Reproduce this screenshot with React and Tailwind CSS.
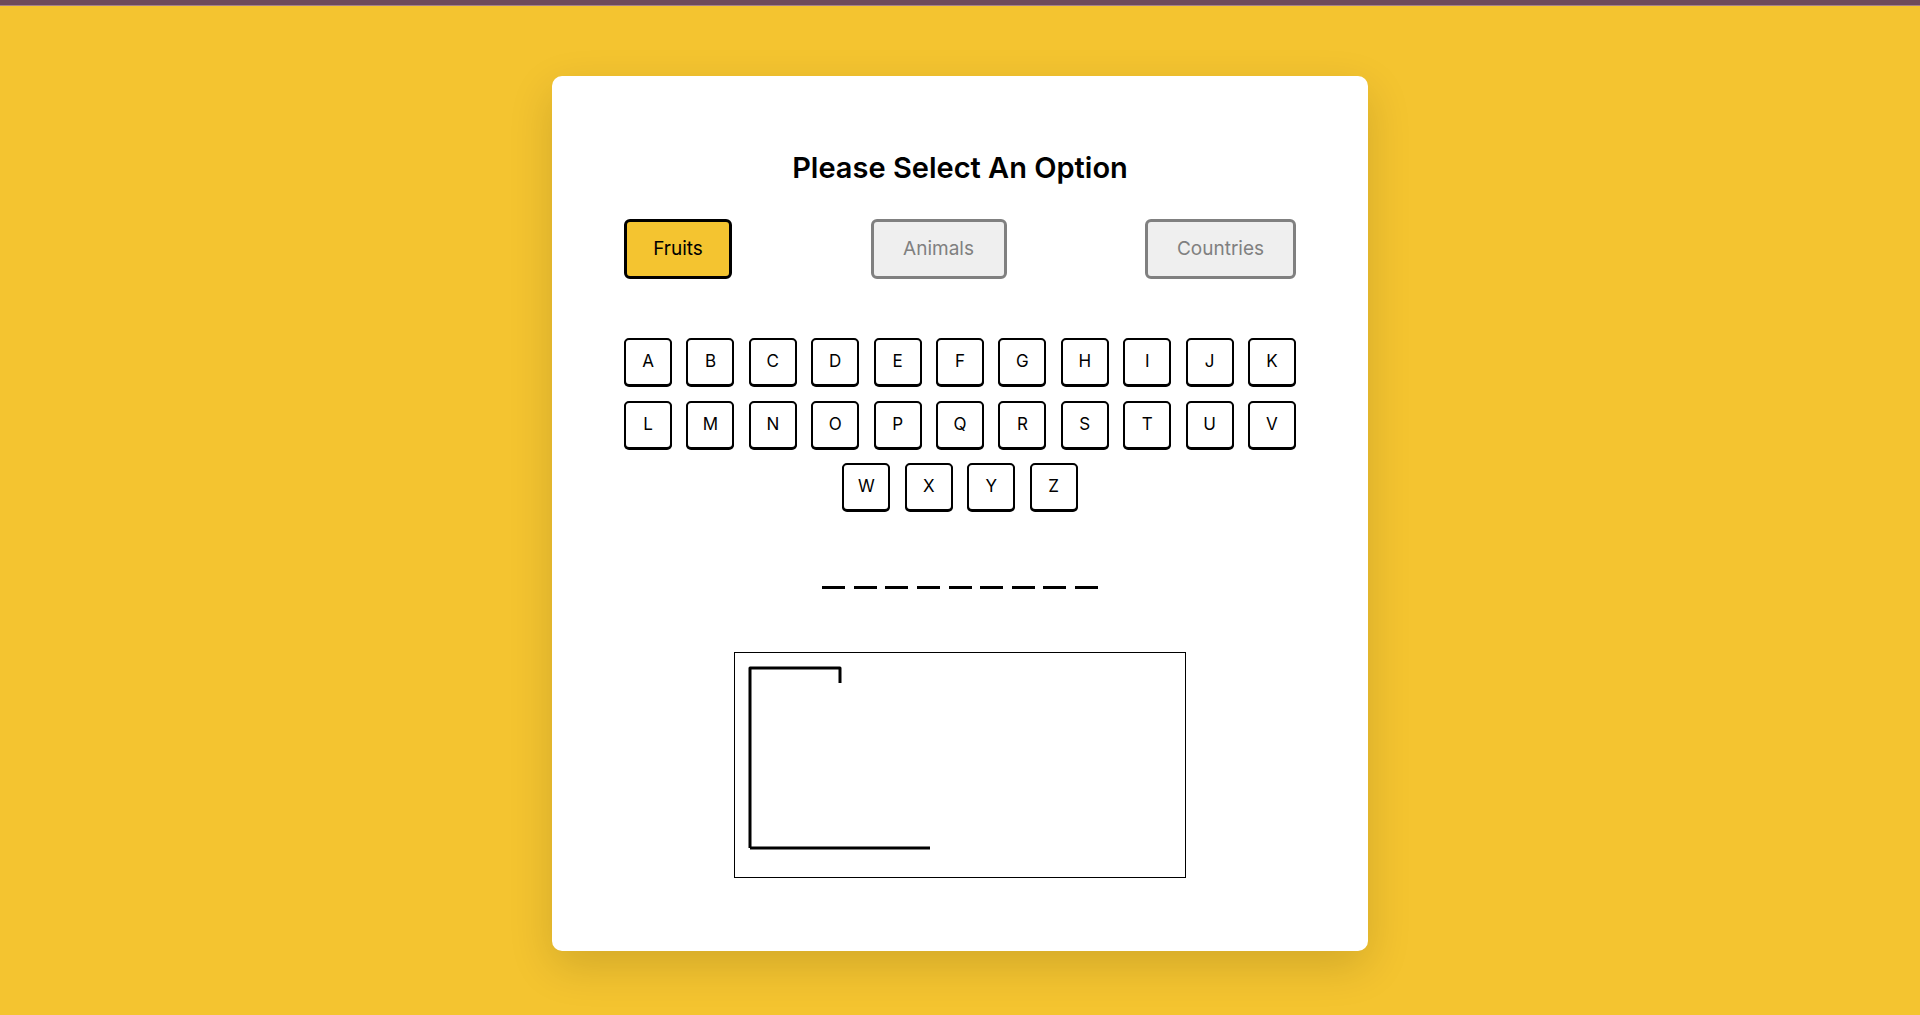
import React, { useState } from "react";

const LETTERS = "ABCDEFGHIJKLMNOPQRSTUVWXYZ".split("");
const OPTIONS = [
  { label: "Fruits", width: "w-[108px]" },
  { label: "Animals", width: "w-[136px]" },
  { label: "Countries", width: "w-[151px]" },
];

const Gallows = () => (
  <svg width="450" height="224" viewBox="0 0 450 224" className="block">
    <path
      d="M15 195 L15 15 L105 15 L105 30"
      fill="none"
      stroke="#000"
      strokeWidth="3"
      strokeLinejoin="round"
    />
    <path d="M15 195 L195 195" fill="none" stroke="#000" strokeWidth="3" strokeLinejoin="round" />
  </svg>
);

const App = () => {
  const [selected, setSelected] = useState("Fruits");

  return (
    <div className="min-h-[1015px] bg-[#f4c430] font-['Inter','Noto_Sans',sans-serif] text-black">
      {/* top strip */}
      <div className="h-[5px] bg-[#6e4a5b]" />
      <div className="h-px bg-[#a5808a]" />

      <div className="flex justify-center pt-[70px]">
        <div className="w-[816px] rounded-[10px] bg-white px-[72px] pt-[75px] pb-[73px] shadow-[0_15px_45px_rgba(0,0,0,0.14)]">
          <h1 className="text-center text-[29px] leading-[34px] font-semibold">
            Please Select An Option
          </h1>

          <div className="mt-[34px] flex justify-between">
            {OPTIONS.map((opt) => (
              <button
                key={opt.label}
                onClick={() => setSelected(opt.label)}
                className={
                  opt.label === selected
                    ? `${opt.width} h-[60px] rounded-[6px] border-[3px] border-black bg-[#f4c430] text-[19px] text-black`
                    : `${opt.width} h-[60px] rounded-[6px] border-[3px] border-[#808080] bg-[#efefef] text-[19px] text-[#808080]`
                }
              >
                {opt.label}
              </button>
            ))}
          </div>

          <div className="mt-[59px] flex flex-wrap justify-center gap-x-[14.4px] gap-y-[14.5px]">
            {LETTERS.map((l) => (
              <button
                key={l}
                className="flex h-[48px] w-[48px] items-center justify-center rounded-[5px] border-2 border-black bg-white text-[17px] shadow-[0_1px_0_#000]"
              >
                {l}
              </button>
            ))}
          </div>

          <div className="mt-[75px] flex justify-center gap-[8.6px]">
            {Array.from({ length: 9 }).map((_, i) => (
              <span key={i} className="block h-[3px] w-[23px] bg-black" />
            ))}
          </div>

          <div className="mt-[63px] flex justify-center">
            <div className="border border-black">
              <Gallows />
            </div>
          </div>
        </div>
      </div>
    </div>
  );
};

export default App;
